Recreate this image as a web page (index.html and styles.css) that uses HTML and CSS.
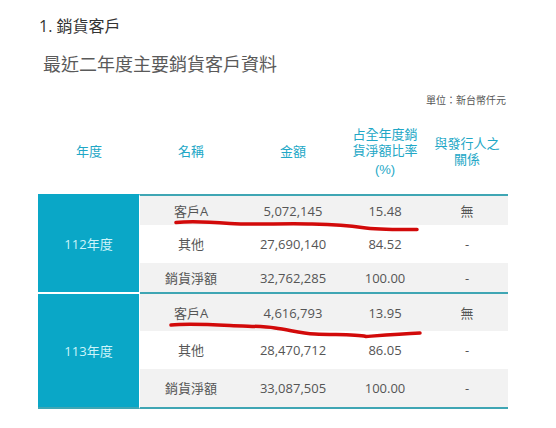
FILE: index.html
```html
<!DOCTYPE html>
<html lang="zh-Hant">
<head>
<meta charset="utf-8">
<title>銷貨客戶</title>
<link rel="stylesheet" href="styles.css">
</head>
<body>
<div class="page">
  <h1 class="title">1. 銷貨客戶</h1>
  <h2 class="subtitle">最近二年度主要銷貨客戶資料</h2>
  <div class="unit">單位：新台幣仟元</div>
  <table class="sales">
    <colgroup>
      <col class="c-year"><col class="c-name"><col class="c-amt"><col class="c-pct"><col class="c-rel">
    </colgroup>
    <thead>
      <tr class="head">
        <th>年度</th>
        <th>名稱</th>
        <th>金額</th>
        <th><span class="hl">占全年度銷</span><span class="hl">貨淨額比率</span><span class="pct">(%)</span></th>
        <th><span class="hl">與發行人之</span><span class="hl">關係</span></th>
      </tr>
    </thead>
    <tbody class="grp g1">
      <tr class="r1 grey">
        <td class="year first" rowspan="3">112年度</td>
        <td>客戶A</td><td>5,072,145</td><td>15.48</td><td>無</td>
      </tr>
      <tr class="r2"><td>其他</td><td>27,690,140</td><td>84.52</td><td>-</td></tr>
      <tr class="r3 grey"><td>銷貨淨額</td><td>32,762,285</td><td>100.00</td><td>-</td></tr>
    </tbody>
    <tbody class="grp g2">
      <tr class="r1 grey">
        <td class="year" rowspan="3">113年度</td>
        <td>客戶A</td><td>4,616,793</td><td>13.95</td><td>無</td>
      </tr>
      <tr class="r2"><td>其他</td><td>28,470,712</td><td>86.05</td><td>-</td></tr>
      <tr class="r3 grey last"><td>銷貨淨額</td><td>33,087,505</td><td>100.00</td><td>-</td></tr>
    </tbody>
  </table>
</div>
<svg class="marks" width="556" height="428" viewBox="0 0 556 428" aria-hidden="true">
  <path d="M176 222.5 C190 221, 205 221.5, 230 223.5 C255 225, 285 223, 312 224 C330 224.5, 345 225, 362 227.5 C380 230, 400 229.5, 417 229.5" />
  <path d="M171 325 C185 323.5, 200 324, 230 325.5 C250 326.5, 262 326, 275 328 C290 330, 300 333, 315 334 C335 335, 355 334, 366 336.5 C380 335.5, 400 334, 420 333" />
</svg>
</body>
</html>
```
FILE: styles.css
```css
html, body {
  margin: 0;
  padding: 0;
  background: #ffffff;
}

body {
  font-family: "Open Sans", "Noto Sans CJK TC", sans-serif;
  color: #555555;
  position: relative;
  width: 556px;
  height: 428px;
  overflow: hidden;
}

.page {
  padding: 16px 0 0 38px;
  width: 470px;
}

.title {
  margin: 0;
  padding-left: 1px;
  font-size: 16px;
  line-height: 20px;
  font-weight: normal;
  color: #333333;
}

.subtitle {
  margin: 16px 0 0 0;
  padding-left: 5px;
  font-size: 18px;
  line-height: 24px;
  font-weight: normal;
  color: #5a5a5a;
}

.unit {
  margin-top: 17px;
  font-size: 10px;
  line-height: 14px;
  text-align: right;
  padding-right: 2px;
  color: #555555;
}

.sales {
  margin-top: 3px;
  width: 470px;
  border-collapse: separate;
  border-spacing: 0;
  table-layout: fixed;
  font-size: 13px;
}

.c-year { width: 102px; }
.c-name { width: 102px; }
.c-amt { width: 102px; }
.c-pct { width: 82px; }
.c-rel { width: 82px; }

.head th {
  height: 84px;
  padding: 0;
  font-family: "Liberation Sans", "Noto Sans CJK TC", sans-serif;
  color: #22a7c6;
  font-weight: normal;
  font-size: 13px;
  line-height: 16px;
  text-align: center;
  vertical-align: middle;
}

.head .hl {
  display: block;
  height: 16px;
}

.head .pct {
  display: block;
  margin-top: 3px;
  height: 16px;
}

.sales td {
  padding: 0;
  text-align: center;
  vertical-align: middle;
  line-height: 16px;
}

.grey td {
  background: #f2f2f2;
}

.sales td.year {
  background: #0aa7c7;
  color: #cdf4fa;
  border-right: 1px solid #ffffff;
  border-top: 2px solid #ffffff;
}

.sales td.year.first {
  border-top: 2px solid #0aa7c7;
}

.r1 td {
  border-top: 2px solid #3fa6b4;
}

.g1 .r1 td:not(.year) { height: 29px; }
.g1 .r2 td { height: 38px; }
.g1 .r3 td { height: 29px; }

.g2 .r1 td:not(.year) { height: 37px; }
.g2 .r2 td { height: 38px; }
.g2 .r3 td { height: 38px; }

.last td {
  border-bottom: 2px solid #3fa6b4;
}

.g2 td.year {
  border-bottom: 2px solid #3fa6b4;
}

.marks {
  position: absolute;
  top: 0;
  left: 0;
  pointer-events: none;
}

.marks path {
  fill: none;
  stroke: #d20a0a;
  stroke-width: 3.5;
  stroke-linecap: round;
  stroke-linejoin: round;
}
```
